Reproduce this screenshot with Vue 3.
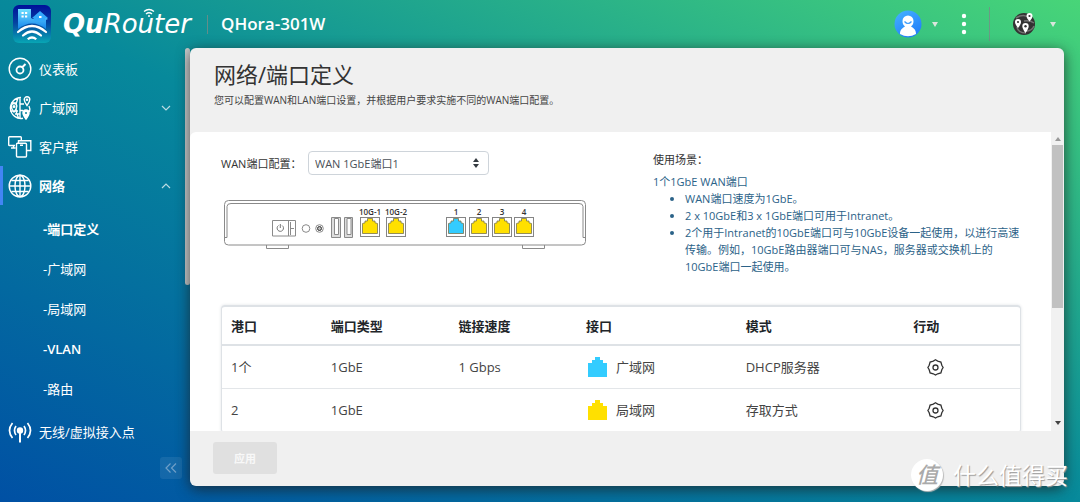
<script setup>
import { ref } from 'vue'

const mode = ref('wan1')
const subItems = [
  { label: '-端口定义', active: true },
  { label: '-广域网' },
  { label: '-局域网' },
  { label: '-VLAN', strong: true },
  { label: '-路由' },
]
const ports = [
  { label: '10G-1', x: 360 },
  { label: '10G-2', x: 386 },
  { label: '1', x: 446, wan: true },
  { label: '2', x: 469 },
  { label: '3', x: 492 },
  { label: '4', x: 514 },
]
const columns = ['港口', '端口类型', '链接速度', '接口', '模式', '行动']
const rows = [
  { port: '1个', type: '1GbE', speed: '1 Gbps', iface: '广域网', mode: 'DHCP服务器', wan: true },
  { port: '2', type: '1GbE', speed: '', iface: '局域网', mode: '存取方式', wan: false },
]
</script>

<template>
  <div class="app">
    <header class="topbar">
      <svg class="app-icon" viewBox="0 0 38 38" aria-hidden="true">
        <defs>
          <linearGradient id="tile" x1="0" y1="0" x2="0" y2="1">
            <stop offset="0" stop-color="#00109a" /><stop offset="0.45" stop-color="#0440a0" /><stop offset="1" stop-color="#08a6b4" />
          </linearGradient>
          <linearGradient id="house" x1="0" y1="0" x2="0" y2="1">
            <stop offset="0" stop-color="#6fe0ff" /><stop offset="1" stop-color="#1585ee" />
          </linearGradient>
        </defs>
        <rect width="38" height="38" rx="6" fill="url(#tile)" />
        <path d="M5 24V4h13v9l2 1 7-7 8 7-2 1v9Q19 13 5 24z" fill="url(#house)" />
        <path d="M19 13l8-7 8 7h-3v3H21v-3z" fill="#32a8fb" />
        <path d="M8.500 7h2.200v2H8.500zm3.500 0h2.200v2H12zM8.500 10.500h2.200v2H8.500zm3.500 0h2.200v2H12zM26 11h2.500v2H26z" fill="#fff" />
        <g fill="none" stroke="#fff" stroke-width="2.2" stroke-linecap="round">
          <path d="M5 27q14-12 28 0M10 30.500q9-8 18 0" />
        </g>
        <path d="M14 33.500q5-4.500 10 0l-1.500 1.500q-3.500-2.500-7 0z" fill="#fff" />
      </svg>
      <div class="brand"><b>Qu</b><span>Router</span>
        <svg class="brand-wave" viewBox="0 0 12 9" aria-hidden="true">
          <path d="M1 3.500q5-4 10 0M3 6q3-2.600 6 0" /><circle cx="6" cy="8" r="1" />
        </svg>
      </div>
      <i class="sep"></i>
      <h1 class="model">QHora-301W</h1>
      <div class="tools">
        <button class="tool user" aria-label="User">
          <svg width="28" height="28" viewBox="0 0 28 28">
            <defs><linearGradient id="ava" x1="0" y1="0" x2="0.600" y2="1"><stop offset="0" stop-color="#46b4ff" /><stop offset="1" stop-color="#227ffa" /></linearGradient></defs>
            <circle cx="14" cy="14" r="13.500" fill="url(#ava)" />
            <path d="M6 24c0-5 3-6 5-7.500C9 15 8.500 13 8.500 11a5.500 5.500 0 0 1 11 0c0 2-.5 4-2.500 5.500 2 1.500 5 2.500 5 7.500q-8 4.500-16 0z" fill="#fff" />
            <path d="M10.500 11.500q3.500 4 7 0" fill="none" stroke="#3b9dfd" stroke-width="1.200" />
          </svg>
          <svg class="caret" width="6" height="5" viewBox="0 0 6 5"><path d="M0 0h6L3 5z" /></svg>
        </button>
        <button class="tool more" aria-label="More">
          <svg width="6" height="22" viewBox="0 0 6 22"><g fill="#fff"><circle cx="3" cy="3" r="2.200" /><circle cx="3" cy="11" r="2.200" /><circle cx="3" cy="19" r="2.200" /></g></svg>
        </button>
        <i class="sep tall"></i>
        <button class="tool region" aria-label="Region">
          <svg width="24" height="24" viewBox="0 0 24 24">
            <circle cx="12" cy="12" r="11" fill="#333" />
            <path d="M4 6q8-5 13 0M12 9q6-1 10 2M5 15q1 6 9 6M14 19q6 0 8-5" fill="none" stroke="#737373" stroke-width="1.500" />
            <g fill="#fff">
              <path d="M6 7a3 3 0 0 1 3 3q0 2-3 6-3-4-3-6a3 3 0 0 1 3-3z" />
              <path d="M17.500 1a3 3 0 0 1 3 3q0 2-3 5.500-3-3.500-3-5.500a3 3 0 0 1 3-3z" />
              <path d="M13.500 11a3.200 3.200 0 0 1 3.200 3.200q0 2.300-3.200 6.800-3.200-4.500-3.200-6.800a3.200 3.200 0 0 1 3.200-3.200z" />
            </g>
            <g fill="#333"><circle cx="6" cy="10" r="1.100" /><circle cx="17.500" cy="4" r="1.100" /><circle cx="13.500" cy="14.300" r="1.200" /></g>
          </svg>
          <svg class="caret" width="6" height="5" viewBox="0 0 6 5"><path d="M0 0h6L3 5z" /></svg>
        </button>
      </div>
    </header>

    <div class="body">
      <aside class="sidebar">
        <nav class="nav">
          <a href="#" class="item">
            <svg class="ico" viewBox="0 0 24 24"><circle cx="12" cy="12" r="10.800" /><circle cx="12" cy="13" r="3.500" stroke-width="1.800" /><path d="M14 10.500l3.500-3.500" stroke-width="2" /></svg>
            <span>仪表板</span>
          </a>
          <a href="#" class="item">
            <svg class="ico" viewBox="0 0 24 24">
              <path d="M13 1.500A10.500 10.500 0 1 0 15 22.300M12 1.500v21M10 2q-4.500 10 .5 20M2 15h8M3 7h6M12 14.500h3M12 8h4M21 10q1.500 3 .5 6M7 18h5" />
              <path d="M6 7.500a2.800 2.800 0 0 1 2.800 2.800Q8.800 12.500 6 16q-2.800-3.500-2.800-5.700A2.800 2.800 0 0 1 6 7.500z" fill="#08859b" />
              <path d="M19 .8a2.800 2.800 0 0 1 2.800 2.800Q21.800 5.800 19 9.500q-2.800-3.700-2.800-5.900A2.800 2.800 0 0 1 19 .8z" />
              <path d="M18 14a3 3 0 0 1 3 3q0 2-3 6-3-4-3-6a3 3 0 0 1 3-3z" fill="#fff" /><circle cx="18" cy="17" r="1" fill="#08859b" stroke="none" />
              <circle cx="6" cy="10.500" r=".8" /><circle cx="19" cy="3.700" r=".6" />
            </svg>
            <span>广域网</span>
            <svg class="chev" viewBox="0 0 10 6"><path d="M1 1l4 4 4-4" /></svg>
          </a>
          <a href="#" class="item">
            <svg class="ico" viewBox="0 0 24 24">
              <path d="M7 10.500H1.500q-.8 0-.8-.8V2.500q0-.8.800-.8h11q.8 0 .8.800v3M3 13h4.500M5.500 10.500V13M10.500 8V5.700h12.300V15.500h-4.300M9.500 8.300h8q1 0 1 1V21q0 1-1 1h-8q-1 0-1-1V9.300q0-1 1-1zM12 10.300h3" />
            </svg>
            <span>客户群</span>
          </a>
          <a href="#" class="item current">
            <svg class="ico" viewBox="0 0 24 24"><circle cx="12" cy="12" r="10.800" /><ellipse cx="12" cy="12" rx="5" ry="10.800" /><path d="M12 1.200v21.600M1.200 12h21.600M3.500 6.500h17M3.500 17.500h17" /></svg>
            <span>网络</span>
            <svg class="chev" viewBox="0 0 10 6"><path d="M1 5l4-4 4 4" /></svg>
          </a>
          <div class="sub">
            <a v-for="s in subItems" :key="s.label" href="#" :class="{ bold: s.active, semi: s.strong }">{{ s.label }}</a>
          </div>
          <a href="#" class="item">
            <svg class="ico" viewBox="0 0 24 24">
              <circle cx="12" cy="10.500" r="2.500" fill="#fff" /><path d="M12 12v10.500" stroke-width="2" />
              <path d="M8 6q-3 4.500 0 9M16 6q3 4.500 0 9M4.500 3q-6 7.500 0 15M19.500 3q6 7.500 0 15" stroke-width="1.700" />
            </svg>
            <span>无线/虚拟接入点</span>
          </a>
          <button class="collapse" aria-label="Collapse">
            <svg width="12" height="10" viewBox="0 0 12 10"><path d="M5.500 .5L1 5l4.500 4.500M11 .5L6.500 5 11 9.500" /></svg>
          </button>
        </nav>
        <div class="side-scroll"><i></i></div>
      </aside>

      <main class="card">
        <div class="card-head">
          <h2>网络/端口定义</h2>
          <p>您可以配置WAN和LAN端口设置，并根据用户要求实施不同的WAN端口配置。</p>
        </div>
        <div class="viewport">
          <div class="content">
            <section class="config">
              <div>
                <div class="field">
                  <label for="wan-mode">WAN端口配置：</label>
                  <div class="select">
                    <select id="wan-mode" v-model="mode"><option value="wan1">WAN 1GbE端口1</option></select>
                    <svg width="6" height="10" viewBox="0 0 6 10" aria-hidden="true"><path d="M0 4h6L3 0zM0 6h6l-3 4z" /></svg>
                  </div>
                </div>
                <svg class="device" viewBox="224 200 363 50" role="img" aria-label="QHora-301W">
                  <g fill="#fff" stroke="#8a8a8a">
                    <path d="M266.500 245v3.500h22V245M522.500 245v3.500h22V245" />
                    <path d="M228.500 200.500h353q4 0 4 4v37q0 3.500-4 3.500h-353q-4 0-4-3.500v-37q0-4 4-4z" />
                    <path d="M224.500 237.500h2.500v-31q0-3 4-3h348q4 0 4 3v31h2.500" fill="none" />
                    <path d="M272.500 220.500h23v15.500h-23zM288.500 220.500V236M290.500 222v13M290.500 228.500h3.500" />
                    <path d="M278.500 225.500a3.200 3.200 0 1 0 3.600 0M280.300 224v4" fill="none" stroke="#666" stroke-width=".9" />
                    <circle cx="306" cy="228.500" r="3.800" />
                    <circle cx="319.500" cy="228.500" r="3.800" /><circle cx="319.500" cy="228.500" r="2" fill="#bbb" stroke="#333" />
                    <path d="M331.500 217.500h9v20h-9zM344.500 217.500h8v20h-8z" fill="#ddd" />
                    <path d="M334.500 218.500h4v16h-4zM347 218.500h4v16h-4z" />
                  </g>
                  <g v-for="p in ports" :key="p.label">
                    <rect :x="p.x + 0.5" y="217.500" width="19" height="19" fill="#fff" stroke="#858585" />
                    <path :transform="`translate(${p.x} 217)`" d="M2.500 16.500V6.500l2.500-.7V4H7.500V1.500h5V4H15v1.800l2.500.7v10z" :fill="p.wan ? '#33ccff' : '#ffe000'" stroke="#77734f" stroke-width=".8" />
                    <text :x="p.x + 10" y="215" text-anchor="middle">{{ p.label }}</text>
                  </g>
                </svg>
              </div>
              <div class="scenario">
                <h3>使用场景：</h3>
                <p>1个1GbE WAN端口</p>
                <ul>
                  <li>WAN端口速度为1GbE。</li>
                  <li>2 x 10GbE和3 x 1GbE端口可用于Intranet。</li>
                  <li>2个用于Intranet的10GbE端口可与10GbE设备一起使用，以进行高速传输。例如，10GbE路由器端口可与NAS，服务器或交换机上的10GbE端口一起使用。</li>
                </ul>
              </div>
            </section>
            <table class="ports">
              <thead><tr><th v-for="c in columns" :key="c" scope="col">{{ c }}</th></tr></thead>
              <tbody>
                <tr v-for="r in rows" :key="r.port">
                  <td>{{ r.port }}</td>
                  <td>{{ r.type }}</td>
                  <td>{{ r.speed }}</td>
                  <td>
                    <div class="iface">
                      <svg width="19" height="20" viewBox="0 0 19 20" aria-hidden="true"><path d="M0 20V6h4V3h3V0h5v3h3v3h4v14z" :fill="r.wan ? '#33ccff' : '#ffe000'" /></svg>
                      {{ r.iface }}
                    </div>
                  </td>
                  <td>{{ r.mode }}</td>
                  <td>
                    <button class="gear" aria-label="Edit">
                      <svg width="17" height="17" viewBox="0 0 17 17"><path d="M8.500 .8l2.200 1.300 3.200.9.900 3.200 1.300 2.300-1.300 2.200-.9 3.200-3.200.9-2.200 1.300-2.200-1.300-3.200-.9-.9-3.200L.9 8.500l1.300-2.300.9-3.200 3.200-.9z" /><circle cx="8.500" cy="8.500" r="2.500" /></svg>
                    </button>
                  </td>
                </tr>
              </tbody>
            </table>
          </div>
          <div class="scrollbar">
            <svg width="6" height="4" viewBox="0 0 6 4"><path d="M0 4h6L3 0z" fill="#999" /></svg>
            <div class="track"><i></i></div>
            <svg width="6" height="4" viewBox="0 0 6 4"><path d="M0 0h6L3 4z" fill="#444" /></svg>
          </div>
        </div>
        <footer class="card-foot"><button class="apply" disabled>应用</button></footer>
      </main>
    </div>

    <div class="watermark"><b>值</b><span>什么值得买</span></div>
  </div>
</template>

<style>
body { margin: 0; }
</style>

<style scoped>
* { box-sizing: border-box; }
.app {
  position: relative;
  display: flex;
  flex-direction: column;
  height: 100vh;
  overflow: hidden;
  background: linear-gradient(to top right, #0050a4, #07899b 50%, #48d578);
  color: #333;
  font-family: "Open Sans", "Noto Sans CJK SC", sans-serif;
  font-size: 13px;
}
h1, h2, h3, p, ul { margin: 0; }
a { color: inherit; text-decoration: none; }
button { border: 0; padding: 0; background: none; font: inherit; }
svg { display: block; flex: none; }

.topbar { display: flex; align-items: center; flex: none; height: 48px; padding: 0 24px 0 13px; color: #fff; }
.app-icon { width: 38px; height: 38px; }
.brand { position: relative; display: flex; align-items: baseline; width: 134px; margin-left: 12px; font: italic 26px/32px "DejaVu Sans", sans-serif; }
.brand b { font-weight: 700; }
.brand-wave { position: absolute; left: 80px; top: 0; width: 12px; height: 9px; fill: #fff; }
.brand-wave path { fill: none; stroke: #fff; stroke-width: 1.3; }
.sep { width: 1px; height: 19px; margin-left: 10px; background: rgba(120, 140, 135, .8); }
.sep.tall { height: 34px; margin: 0; }
.model { margin-left: 13px; font-size: 17px; font-weight: 600; line-height: 24px; }
.tools { display: flex; align-items: center; margin-left: auto; }
.tool { display: flex; align-items: center; }
.caret { fill: #d9e5dd; }
.user { gap: 10px; }
.more { margin: 0 22px 0 23px; }
.region { margin-left: 22px; gap: 14px; }

.body { display: flex; flex: 1; min-height: 0; padding: 0 16px 16px 0; }
.sidebar { display: flex; flex: none; width: 190px; color: #fff; }
.nav { display: flex; flex-direction: column; flex: 1; padding-top: 1px; }
.item { display: flex; align-items: center; height: 39px; padding: 0 14px 0 8px; border-left: 0 solid #4285f4; line-height: 20px; }
.item.current { border-left-width: 3px; padding-left: 5px; font-weight: 700; }
.ico { width: 24px; height: 24px; margin-right: 7px; fill: none; stroke: #fff; stroke-width: 1.4; }
.chev { width: 10px; height: 6px; margin-left: auto; fill: none; stroke: #b9dbe2; stroke-width: 1.2; }
.sub { display: flex; flex-direction: column; padding: 4px 0 3px 43px; }
.sub a { line-height: 40px; }
.sub .bold { font-weight: 700; }
.sub .semi { font-weight: 600; }
.collapse { display: flex; align-items: center; justify-content: center; align-self: flex-end; width: 22px; height: 22px; margin: 6px 3px 0 0; border-radius: 3px; background: rgba(255, 255, 255, .08); }
.collapse path { fill: none; stroke: #6f9fc8; stroke-width: 1.2; }
.side-scroll { width: 5px; }
.side-scroll i { display: block; height: 54%; border-radius: 3px; background: #c9cccd; }

.card { display: flex; flex-direction: column; flex: 1; min-width: 0; border-radius: 6px; overflow: hidden; background: #f0f0f0; box-shadow: 0 3px 14px rgba(30, 30, 30, .75); }
.card-head { flex: none; height: 84px; padding: 10px 24px; }
.card-head h2 { font-size: 22px; font-weight: 400; line-height: 32px; }
.card-head p { color: #444; font-size: 10px; line-height: 20px; }
.viewport { display: flex; flex: 1; min-height: 0; background: #fff; border-top-left-radius: 6px; }
.content { flex: 1; min-width: 0; padding: 19px 30px 0 31px; overflow: hidden; }
.config { display: grid; grid-template-columns: 54% 46%; height: 154px; font-size: 11px; }
.field { display: flex; align-items: center; height: 24px; }
.field label { width: 87px; white-space: nowrap; }
.select { position: relative; width: 181px; }
.select select { display: block; width: 100%; height: 24px; padding: 0 20px 0 6px; border: 1px solid #ced4da; border-radius: 4px; appearance: none; background: #fff; color: #495057; font: inherit; }
.select svg { position: absolute; right: 10px; top: 7px; fill: #343a40; }
.device { width: 363px; max-width: 100%; margin: 25px 0 0 3px; }
.device text { fill: #333; font-size: 8px; font-weight: 600; }
.scenario { color: #2b6288; line-height: 17px; }
.scenario h3 { margin-bottom: 5px; color: #333; font-size: 11px; font-weight: 400; line-height: 17px; }
.scenario ul { padding-left: 32px; }

.ports { width: 100%; table-layout: fixed; border-collapse: separate; border-spacing: 0; border: 1px solid #dee2e6; border-top-width: 2px; border-radius: 4px; box-shadow: 0 0 3px rgba(40, 60, 90, .15); }
.ports th, .ports td { padding: 0 0 0 9px; text-align: left; line-height: 20px; white-space: nowrap; }
.ports th { height: 39px; border-bottom: 2px solid #dee2e6; color: #212529; font-weight: 700; }
.ports td { height: 43px; border-bottom: 1px solid #e3e6e9; color: #444; }
.ports th:nth-child(1) { width: 12.5%; }
.ports th:nth-child(2), .ports th:nth-child(3) { width: 16%; }
.ports th:nth-child(4) { width: 20%; }
.ports th:nth-child(5) { width: 21%; }
.iface { display: flex; align-items: center; gap: 9px; padding-left: 2px; }
.gear { display: block; margin-left: 14px; }
.gear svg { fill: none; stroke: #333; stroke-width: 1.3; }

.scrollbar { display: flex; flex-direction: column; align-items: center; width: 13px; padding: 5px 0 6px; background: #f1f1f1; }
.track { flex: 1; width: 11px; margin: 4px 0; }
.track i { display: block; height: 60%; background: #c1c1c1; }
.card-foot { flex: none; height: 55px; padding: 11px 23px; }
.apply { width: 64px; height: 32px; border-radius: 3px; background: #e0e0e0; color: #f8f8f8; font-size: 11px; font-weight: 700; }

.watermark { position: absolute; right: 12px; bottom: 10px; display: flex; align-items: center; gap: 10px; color: #fff; font-size: 23px; line-height: 34px; text-shadow: 1px 1px 1px #999; }
.watermark b { width: 32px; height: 32px; border-radius: 50%; background: #fff; box-shadow: 1px 1px 1px #bbb; color: #aaa; font-size: 22px; font-style: italic; font-weight: 500; line-height: 30px; text-align: center; text-shadow: none; }
</style>
